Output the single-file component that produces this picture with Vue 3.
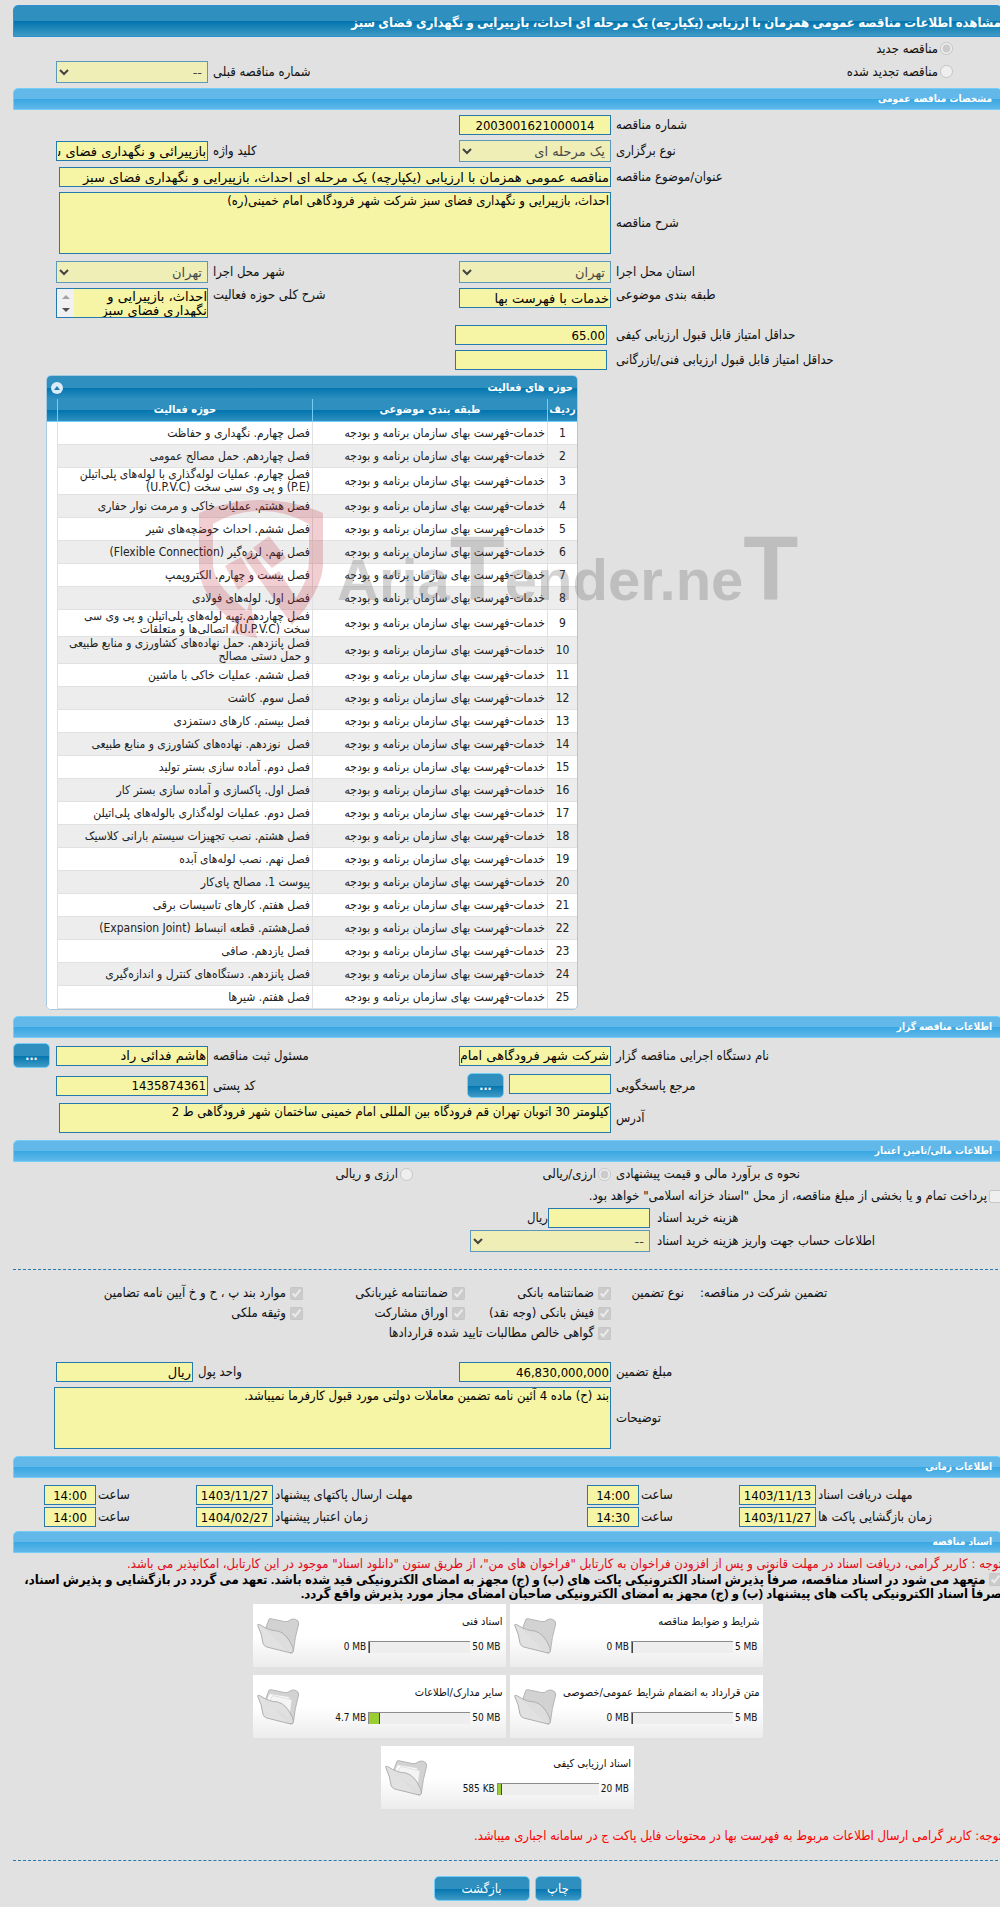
<template>
  <div class="viewport" dir="rtl">
    <main class="page">
      <h1 class="title-bar">
        مشاهده اطلاعات مناقصه عمومی همزمان با ارزیابی (یکپارچه) یک مرحله ای احداث، بازپیرایی و نگهداری فضای سبز
      </h1>

      <!-- نوع مناقصه -->
      <div class="kind">
        <div class="kind-options">
          <label class="option">
            <input type="radio" name="kind" checked disabled />
            <span>مناقصه جدید</span>
          </label>
          <label class="option">
            <input type="radio" name="kind" disabled />
            <span>مناقصه تجدید شده</span>
          </label>
        </div>
        <label class="label" for="prev-number">شماره مناقصه قبلی</label>
        <select id="prev-number" class="field" disabled>
          <option>--</option>
        </select>
      </div>

      <h2 class="section-bar">مشخصات مناقصه عمومی</h2>
      <div class="form">
        <label class="label" for="number">شماره مناقصه</label>
        <input id="number" class="field numeric centered" type="text" value="2003001621000014" readonly />

        <label class="label first" for="holding">نوع برگزاری</label>
        <select id="holding" class="field" disabled>
          <option>یک مرحله ای</option>
        </select>
        <label class="label" for="keyword">کلید واژه</label>
        <input id="keyword" class="field" type="text" value="بازپیرائی و نگهداری فضای سبز" readonly />

        <label class="label first" for="subject">عنوان/موضوع مناقصه</label>
        <input
          id="subject"
          class="field wide"
          type="text"
          value="مناقصه عمومی همزمان با ارزیابی (یکپارچه) یک مرحله ای احداث، بازپیرایی و نگهداری فضای سبز"
          readonly
        />

        <label class="label first" for="description">شرح مناقصه</label>
        <textarea id="description" class="field wide tall" readonly>احداث، بازپیرایی و نگهداری فضای سبز شرکت شهر فرودگاهی امام خمینی(ره)</textarea>

        <label class="label first spaced" for="province">استان محل اجرا</label>
        <select id="province" class="field spaced" disabled>
          <option>تهران</option>
        </select>
        <label class="label spaced" for="city">شهر محل اجرا</label>
        <select id="city" class="field spaced" disabled>
          <option>تهران</option>
        </select>

        <label class="label first top" for="category">طبقه بندی موضوعی</label>
        <input id="category" class="field top" type="text" value="خدمات با فهرست بها" readonly />
        <label class="label top" for="scope">شرح کلی حوزه فعالیت</label>
        <div class="field scroll-field">
          <textarea id="scope" readonly>احداث، بازپیرایی و نگهداری فضای سبز</textarea>
          <div class="scroll-track">
            <span class="arrow-up"></span>
            <span class="arrow-down"></span>
          </div>
        </div>

        <label class="label first spaced" for="min-quality">حداقل امتیاز قابل قبول ارزیابی کیفی</label>
        <input id="min-quality" class="field numeric spaced shifted" type="text" value="65.00" readonly />

        <label class="label first" for="min-technical">حداقل امتیاز قابل قبول ارزیابی فنی/بازرگانی</label>
        <input id="min-technical" class="field shifted" type="text" readonly />
      </div>

      <!-- حوزه های فعالیت -->
      <section class="activities">
        <div class="panel">
          <div class="panel-head">
            <h3>حوزه های فعالیت</h3>
            <button class="collapse" type="button" aria-label="بستن">
              <svg width="6" height="4" viewBox="0 0 6 4"><path d="M0 4L3 0l3 4z" fill="#1c7fb2" /></svg>
            </button>
          </div>
          <table>
            <colgroup>
              <col class="col-index" />
              <col class="col-category" />
              <col />
              <col class="col-rest" />
            </colgroup>
            <thead>
              <tr>
                <th>ردیف</th>
                <th>طبقه بندی موضوعی</th>
                <th>حوزه فعالیت</th>
                <th></th>
              </tr>
            </thead>
            <tbody>
              <tr v-for="(activity, index) in activities" :key="index">
                <td class="index">{{ index + 1 }}</td>
                <td>خدمات-فهرست بهای سازمان برنامه و بودجه</td>
                <td class="activity">{{ activity }}</td>
                <td class="rest"></td>
              </tr>
            </tbody>
          </table>
        </div>

        <svg class="watermark" width="620" height="140" viewBox="0 0 620 140" direction="ltr">
          <g fill="#be1e2d" fill-opacity="0.22">
            <path
              fill-rule="evenodd"
              d="M0 13Q30 0 62 0T124 13V66Q122 92 93 125L45 57L52 50L72 76L80 71L97 98Q110 80 110 60V24Q88 11 62 11T14 24V66Q16 84 40 104L48 111L51 100L58 138L31 133L37 124Q0 96 0 66Z"
            />
            <path d="M26 66L42 57L55 79L39 90Z" />
            <path d="M54 48L70 36L87 58L73 68Z" />
          </g>
          <text class="watermark-text" x="138" y="100">
            Aria<tspan class="large">T</tspan>ender.ne<tspan class="large">T</tspan>
          </text>
        </svg>
      </section>

      <h2 class="section-bar">اطلاعات مناقصه گزار</h2>
      <div class="form holder">
        <label class="label first" for="agency">نام دستگاه اجرایی مناقصه گزار</label>
        <input id="agency" class="field" type="text" value="شرکت شهر فرودگاهی امام خمینی" readonly />
        <label class="label" for="registrar">مسئول ثبت مناقصه</label>
        <input id="registrar" class="field" type="text" value="هاشم فدائی راد" readonly />
        <button class="btn more" type="button">...</button>

        <label class="label first" for="responder">مرجع پاسخگویی</label>
        <div class="with-button">
          <input id="responder" class="field" type="text" readonly />
          <button class="btn more" type="button">...</button>
        </div>
        <label class="label" for="postal">کد پستی</label>
        <input id="postal" class="field numeric" type="text" value="1435874361" readonly />

        <label class="label first" for="address">آدرس</label>
        <textarea id="address" class="field wide short" readonly>کیلومتر 30 اتوبان تهران قم فرودگاه بین المللی امام خمینی ساختمان شهر فرودگاهی ط 2</textarea>
      </div>

      <h2 class="section-bar">اطلاعات مالی/تامین اعتبار</h2>
      <div class="currency">
        <span class="label">نحوه ی برآورد مالی و قیمت پیشنهادی</span>
        <label class="option">
          <input type="radio" name="currency" checked disabled />
          <span>ارزی/ریالی</span>
        </label>
        <label class="option">
          <input type="radio" name="currency" disabled />
          <span>ارزی و ریالی</span>
        </label>
      </div>
      <label class="option treasury">
        <input type="checkbox" disabled />
        <span>پرداخت تمام و یا بخشی از مبلغ مناقصه، از محل "اسناد خزانه اسلامی" خواهد بود.</span>
      </label>
      <div class="purchase">
        <label class="label" for="cost">هزینه خرید اسناد</label>
        <div class="cost">
          <input id="cost" class="field" type="text" readonly />
          <span>ریال</span>
        </div>
        <label class="label" for="account">اطلاعات حساب جهت واریز هزینه خرید اسناد</label>
        <select id="account" class="field" disabled>
          <option>--</option>
        </select>
      </div>

      <hr class="divider" />

      <!-- تضمین -->
      <div class="guarantee">
        <span class="guarantee-title">تضمین شرکت در مناقصه:</span>
        <span class="guarantee-type">نوع تضمین</span>
        <div class="guarantee-options">
          <label v-for="item in guarantees" :key="item" class="option spacious">
            <input type="checkbox" checked disabled />
            <span>{{ item }}</span>
          </label>
        </div>
      </div>
      <div class="form amount">
        <label class="label first" for="amount">مبلغ تضمین</label>
        <input id="amount" class="field numeric" type="text" value="46,830,000,000" readonly />
        <label class="label" for="currency-unit">واحد پول</label>
        <input id="currency-unit" class="field" type="text" value="ریال" readonly />

        <label class="label first" for="notes">توضیحات</label>
        <textarea id="notes" class="field wide tall" readonly>بند (ح) ماده 4 آئین نامه تضمین معاملات دولتی مورد قبول کارفرما نمیباشد.</textarea>
      </div>

      <h2 class="section-bar">اطلاعات زمانی</h2>
      <div class="deadlines">
        <template v-for="(item, index) in deadlines" :key="item.title">
          <label class="label" :for="'date-' + index">{{ item.title }}</label>
          <input :id="'date-' + index" class="field numeric centered" type="text" :value="item.date" readonly />
          <label class="label" :for="'time-' + index">ساعت</label>
          <input :id="'time-' + index" class="field numeric centered" type="text" :value="item.time" readonly />
        </template>
      </div>

      <h2 class="section-bar">اسناد مناقصه</h2>
      <p class="notice">
        توجه : کاربر گرامی، دریافت اسناد در مهلت قانونی و پس از افزودن فراخوان به کارتابل "فراخوان های من"، از طریق ستون "دانلود اسناد" موجود در این کارتابل، امکانپذیر می باشد.
      </p>
      <label class="commitment">
        <input type="checkbox" checked disabled />
        متعهد می شود در اسناد مناقصه، صرفاً پذیرش اسناد الکترونیکی پاکت های (ب) و (ج) مجهز به امضای الکترونیکی قید شده باشد. تعهد می گردد در بازگشایی و پذیرش اسناد،<br />
        صرفاً اسناد الکترونیکی پاکت های پیشنهاد (ب) و (ج) مجهز به امضای الکترونیکی صاحبان امضای مجاز مورد پذیرش واقع گردد.
      </label>

      <div class="documents">
        <article v-for="doc in documents" :key="doc.title" class="document">
          <div class="document-body">
            <h4>{{ doc.title }}</h4>
            <div class="usage">
              <span dir="ltr">{{ doc.max }}</span>
              <div class="track">
                <div class="used" :style="{ width: doc.percent + '%' }"></div>
              </div>
              <span dir="ltr">{{ doc.used }}</span>
            </div>
          </div>
          <svg class="folder" width="43" height="37" viewBox="0 0 130 112">
            <path
              d="M26 32L36 4Q40 0 46 3L84 11Q94 12 100 6Q108 1 116 4Q127 8 126 18Q114 60 110 100Q108 108 100 106Z"
              fill="#d2d2d2"
              stroke="#b4b4b4"
              stroke-width="3"
            />
            <template v-if="doc.percent > 0">
              <path d="M26 40L38 14L98 24L92 84Z" fill="#fafafa" stroke="#d5d5d5" stroke-width="2" />
              <path d="M30 46L48 20L106 32L98 88Z" fill="#f4f4f4" stroke="#d5d5d5" stroke-width="2" />
            </template>
            <path
              d="M2 22Q1 17 8 20Q40 40 62 39Q90 46 108 88L110 100Q108 108 99 105L30 88Q20 85 18 76Q15 48 2 22Z"
              fill="#dedede"
              fill-opacity="0.9"
              stroke="#adadad"
              stroke-width="3"
            />
          </svg>
        </article>
      </div>

      <p class="notice bright">
        توجه: کاربر گرامی ارسال اطلاعات مربوط به فهرست بها در محتویات فایل پاکت ج در سامانه اجباری میباشد.
      </p>

      <hr class="divider" />

      <div class="actions">
        <button class="btn print" type="button">چاپ</button>
        <button class="btn back" type="button">بازگشت</button>
      </div>
    </main>
  </div>
</template>

<script setup>
const activities = [
  'فصل چهارم. نگهداری و حفاظت',
  'فصل چهاردهم. حمل مصالح عمومی',
  'فصل چهارم. عملیات لوله‌گذاری با لوله‌های پلی‌اتیلن (P.E) و پی وی سی سخت (U.P.V.C)',
  'فصل هشتم. عملیات خاکی و مرمت نوار حفاری',
  'فصل ششم. احداث حوضچه‌های شیر',
  'فصل نهم. لرزه‌گیر (Flexible Connection)',
  'فصل بیست و چهارم. الکتروپمپ',
  'فصل اول. لوله‌های فولادی',
  'فصل چهاردهم.تهیه لوله‌های پلی‌اتیلن و پی وی سی سخت (U.P.V.C)، اتصالی‌ها و متعلقات',
  'فصل پانزدهم. حمل نهاده‌های کشاورزی و منابع طبیعی و حمل دستی مصالح',
  'فصل ششم. عملیات خاکی با ماشین',
  'فصل سوم. کاشت',
  'فصل بیستم. کارهای دستمزدی',
  'فصل  نوزدهم. نهاده‌های کشاورزی و منابع طبیعی',
  'فصل دوم. آماده سازی بستر تولید',
  'فصل اول. پاکسازی و آماده سازی بستر کار',
  'فصل دوم. عملیات لوله‌گذاری بالوله‌های پلی‌اتیلن',
  'فصل هشتم. نصب تجهیزات سیستم بارانی کلاسیک',
  'فصل نهم. نصب لوله‌های آبده',
  'پیوست 1. مصالح پای‌کار',
  'فصل هفتم. کارهای تاسیسات برقی',
  'فصل‌هشتم. قطعه انبساط (Expansion Joint)',
  'فصل یازدهم. صافی',
  'فصل پانزدهم. دستگاه‌های کنترل و اندازه‌گیری',
  'فصل هفتم. شیرها',
];

const guarantees = [
  'ضمانتنامه بانکی',
  'ضمانتنامه غیربانکی',
  'موارد بند پ ، ح و خ آیین نامه تضامین',
  'فیش بانکی (وجه نقد)',
  'اوراق مشارکت',
  'وثیقه ملکی',
  'گواهی خالص مطالبات تایید شده قراردادها',
];

const deadlines = [
  { title: 'مهلت دریافت اسناد', date: '1403/11/13', time: '14:00' },
  { title: 'مهلت ارسال پاکتهای پیشنهاد', date: '1403/11/27', time: '14:00' },
  { title: 'زمان بازگشایی پاکت ها', date: '1403/11/27', time: '14:30' },
  { title: 'زمان اعتبار پیشنهاد', date: '1404/02/27', time: '14:00' },
];

// percent: سهم استفاده شده از ظرفیت هر پوشه
const documents = [
  { title: 'شرایط و ضوابط مناقصه', used: '0 MB', max: '5 MB', percent: 0 },
  { title: 'اسناد فنی', used: '0 MB', max: '50 MB', percent: 0 },
  { title: 'متن قرارداد به انضمام شرایط عمومی/خصوصی', used: '0 MB', max: '5 MB', percent: 0 },
  { title: 'سایر مدارک/اطلاعات', used: '4.7 MB', max: '50 MB', percent: 10 },
  { title: 'اسناد ارزیابی کیفی', used: '585 KB', max: '20 MB', percent: 3 },
];
</script>

<style>
body {
  background: #e1e1e1;
}
</style>

<style scoped>
.viewport {
  overflow: hidden;
  font-family: 'DejaVu Sans Condensed', 'DejaVu Sans', sans-serif;
  font-size: 13px;
  line-height: 14px;
  color: #111;
}

.viewport * {
  box-sizing: border-box;
}

/* the form runs slightly past the right edge of the frame */
.page {
  margin: 0 -2px 0 13px;
  padding: 5px 0 6px;
}

h1,
h2,
h3,
h4,
p {
  margin: 0;
}

.title-bar {
  height: 32px;
  border: 1px solid #2f90d5;
  border-radius: 5px 5px 0 0;
  background: linear-gradient(#2f8fbf 50%, #0074ae 50%, #3f9ac5);
  color: #fff;
  font-family: 'Noto Sans', 'DejaVu Sans Condensed', sans-serif;
  font-size: 13px;
  line-height: 32px;
  white-space: nowrap;
}

.section-bar {
  height: 22px;
  padding: 0 9px;
  border: 1px solid #74cdf6;
  border-radius: 5px 5px 0 0;
  background: linear-gradient(#62b9e9 50%, #38a7e2 50%, #60b8e9);
  color: #fff;
  font-size: 10px;
  line-height: 20px;
}

.option {
  display: flex;
  align-items: center;
  gap: 2px;
}

.option input,
.commitment input {
  width: 13px;
  height: 13px;
  margin: 0;
  flex: none;
}

.option.spacious {
  gap: 4px;
}

.label {
  text-align: left;
  white-space: nowrap;
}

.field {
  width: 100%;
  height: 20px;
  margin: 0;
  padding: 0 1px;
  border: 1px solid #2579ad;
  border-radius: 0;
  outline: none;
  background: #f6f4a5;
  color: #000;
  font-family: 'DejaVu Sans', sans-serif;
  font-size: 13px;
}

.numeric,
textarea.field {
  font-family: 'DejaVu Sans Condensed', 'DejaVu Sans', sans-serif;
}

textarea.field {
  display: block;
  resize: none;
  overflow: hidden;
  line-height: 16px;
}

select.field {
  height: 22px;
  padding: 0 1px;
}

.centered {
  text-align: center;
}

/* kind of tender */
.kind {
  display: grid;
  grid-template-columns: 542fr 246fr 152px;
  column-gap: 5px;
  align-items: end;
  padding: 0 0 5px 43px;
}

.kind-options {
  padding-right: 49px;
}

.kind-options .option {
  height: 23px;
}

.kind .label {
  line-height: 22px;
}

/* two column forms */
.form {
  display: grid;
  grid-template-columns: 386fr 152px 241fr 152px;
  gap: 5px;
  align-items: center;
  padding: 5px 0 5px 43px;
}

.first {
  grid-column: 1;
}

.wide {
  grid-column: 2 / 5;
  width: auto;
  margin-left: 3px;
}

.tall {
  height: 62px;
}

.short {
  height: 30px;
}

.top {
  align-self: start;
}

.spaced {
  margin-top: 2px;
}

.shifted {
  position: relative;
  right: 4px;
}

.scroll-field {
  display: flex;
  height: 30px;
  padding: 0;
}

.scroll-field textarea {
  flex: 1;
  min-width: 0;
  padding: 1px 0 0;
  border: 0;
  outline: none;
  resize: none;
  overflow: hidden;
  background: none;
  font: inherit;
  line-height: 14px;
}

.scroll-track {
  display: flex;
  flex-direction: column;
  justify-content: space-between;
  align-items: center;
  width: 17px;
  padding: 6px 0 5px;
  background: #f1f1f1;
}

.arrow-up,
.arrow-down {
  border: 4px solid transparent;
}

.arrow-up {
  border-top: 0;
  border-bottom-color: #a3a3a3;
}

.arrow-down {
  border-bottom: 0;
  border-top-color: #505050;
}

/* activities */
.activities {
  position: relative;
  width: 532px;
  margin: 0 auto 6px 33px;
}

.panel {
  overflow: hidden;
  border: 1px solid #a6c9e2;
  border-radius: 5px;
  background: #fff;
}

.panel-head {
  display: flex;
  justify-content: space-between;
  align-items: center;
  height: 23px;
  padding: 0 4px 0 4px;
  background: linear-gradient(#2f8fbf 50%, #0074ae 50%, #2f8fbf);
  color: #fff;
}

.panel-head h3 {
  font-size: 11px;
}

.collapse {
  display: flex;
  align-items: center;
  justify-content: center;
  width: 12px;
  height: 12px;
  padding: 0;
  border: 0;
  border-radius: 50%;
  background: #dcebf7;
}

table {
  width: 100%;
  table-layout: fixed;
  border-collapse: separate;
  border-spacing: 0;
}

.col-index {
  width: 30px;
}

.col-category {
  width: 235px;
}

.col-rest {
  width: 10px;
}

th {
  height: 23px;
  padding: 0;
  border-left: 1px solid #74cdf6;
  border-bottom: 1px solid #74cdf6;
  background: linear-gradient(#2f8fbf 50%, #0074ae 50%, #2f8fbf);
  color: #fff;
  font-size: 11px;
}

th:last-child {
  border-left: 0;
}

td {
  height: 23px;
  padding: 0 2px;
  border-left: 1px solid #e1e1e1;
  border-bottom: 1px solid #e1e1e1;
  color: #222;
  font-size: 12px;
  line-height: 13px;
  white-space: pre-wrap;
}

tr:nth-child(even) td {
  background: #ededed;
}

td.index {
  text-align: center;
}

td.activity {
  padding-left: 8px;
}

tr td.rest {
  border: 0;
  background: #fff;
}

.watermark {
  position: absolute;
  top: 125px;
  left: 153px;
  pointer-events: none;
}

.watermark-text {
  fill: #646464;
  fill-opacity: 0.28;
  font-family: 'Liberation Sans Narrow', 'Liberation Sans', sans-serif;
  font-size: 58px;
  font-weight: bold;
}

.watermark-text .large {
  font-size: 90px;
}

/* tender holder */
.btn {
  border: 1px solid #74cdf6;
  border-radius: 5px;
  background: linear-gradient(#2f8fbf 50%, #0074ae 50%, #3f9ac5);
  color: #fff;
  font-family: inherit;
  font-size: 13px;
  padding: 0;
}

.more {
  width: 37px;
  height: 25px;
  font-size: 12px;
  font-weight: bold;
}

.holder {
  grid-template-columns: 386fr 152px 241fr 152px 38px;
  padding: 5px 0 7px;
}

.holder > .more {
  justify-self: end;
}

.with-button {
  display: flex;
  gap: 5px;
}

.with-button .field {
  width: 102px;
  margin-top: 1px;
}

/* finance */
.currency {
  display: grid;
  grid-template-columns: 386fr 193fr 400fr;
  column-gap: 5px;
  height: 24px;
  align-items: center;
}

.treasury {
  height: 20px;
  margin-bottom: 2px;
}

.purchase {
  display: grid;
  grid-template-columns: 345fr 637fr;
  gap: 2px 7px;
  align-items: center;
}

.purchase .field {
  width: 180px;
}

.cost {
  display: flex;
  align-items: center;
}

.purchase .cost .field {
  width: 102px;
}

.divider {
  height: 0;
  margin: 17px 4px 15px 0;
  border: 0;
  border-top: 1px dashed #2579ad;
}

.guarantee {
  display: grid;
  grid-template-columns: 302fr 89fr 598fr;
  align-items: start;
}

.guarantee-title {
  text-align: left;
  line-height: 16px;
}

.guarantee-type {
  padding-right: 16px;
  line-height: 16px;
}

.guarantee-options {
  display: grid;
  grid-template-columns: 146px 162px 1fr;
  row-gap: 4px;
}

.guarantee-options .option {
  height: 16px;
  white-space: nowrap;
}

.amount {
  grid-template-columns: 386fr 152px 256fr 137px;
  padding: 21px 0 7px 43px;
}

.amount .wide {
  margin-left: -2px;
}

/* deadlines */
.deadlines {
  display: grid;
  grid-template-columns: 184fr 77px 96fr 52px 310fr 77px 96fr 52px;
  gap: 2px;
  align-items: center;
  padding: 7px 0 4px 31px;
}

/* documents */
.notice {
  padding: 4px 0 1px;
  color: #e20a17;
  white-space: nowrap;
}

.notice.bright {
  padding: 0;
  color: #ff0000;
}

.commitment {
  display: block;
  font-family: 'Noto Sans', 'DejaVu Sans Condensed', sans-serif;
  font-weight: bold;
  color: #000;
  white-space: nowrap;
}

.commitment input {
  vertical-align: bottom;
}

.documents {
  display: flex;
  flex-wrap: wrap;
  justify-content: center;
  gap: 8px 4px;
  width: 520px;
  margin: 4px auto 20px;
}

.document {
  display: flex;
  justify-content: space-between;
  width: 253px;
  height: 63px;
  padding: 11px 3px 0 4px;
  background: linear-gradient(#fff 50%, #ececec);
}

.document h4 {
  font-size: 11px;
  font-weight: normal;
  line-height: 14px;
  white-space: nowrap;
}

.usage {
  display: flex;
  align-items: center;
  gap: 2px;
  margin-top: 11px;
  padding-right: 2px;
  font-size: 10px;
}

.track {
  direction: ltr;
  width: 102px;
  height: 12px;
  border-top: 1px solid #8c8c8c;
  border-left: 1px solid #8c8c8c;
  background: #eee;
}

.used {
  box-sizing: content-box;
  height: 11px;
  border-right: 1px solid #444;
  background: #9acd32;
}

.folder {
  flex: none;
  margin-top: 3px;
}

.actions {
  display: flex;
  justify-content: center;
  gap: 5px;
}

.actions .btn {
  height: 25px;
}

.print {
  width: 47px;
}

.back {
  width: 96px;
}
</style>
